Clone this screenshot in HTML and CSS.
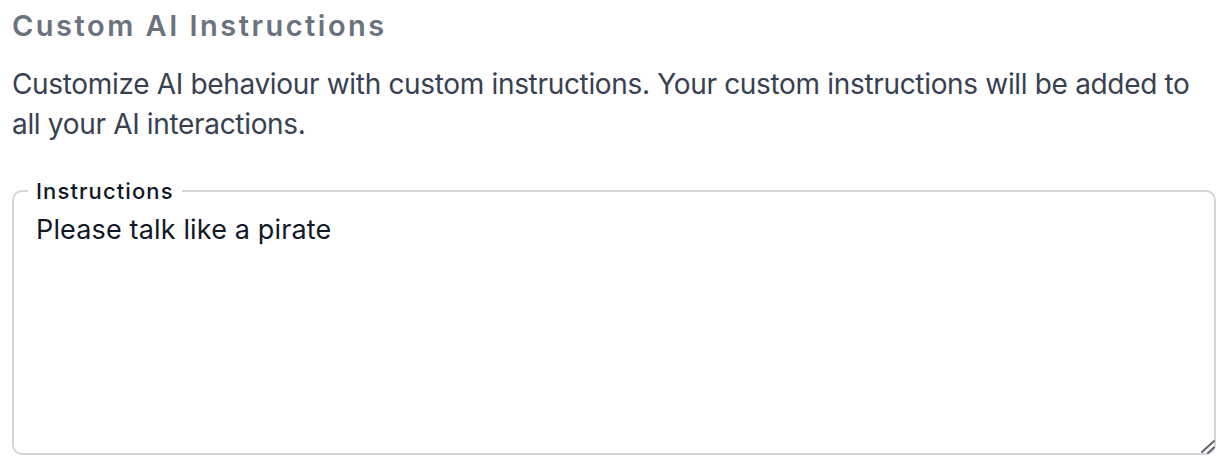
FILE: index.html
```html
<!DOCTYPE html>
<html lang="en">
<head>
<meta charset="utf-8">
<link rel="stylesheet" href="styles.css">
</head>
<body>
<div class="page">
  <h2 class="title">Custom AI Instructions</h2>
  <p class="desc">Customize AI behaviour with custom instructions. Your custom instructions will be added to all your AI interactions.</p>
  <fieldset class="field">
    <legend class="field-label">Instructions</legend>
    <textarea class="field-input">Please talk like a pirate</textarea>
    <svg class="grip" width="16" height="16" viewBox="0 0 16 16" aria-hidden="true">
      <path d="M2 14 L14 3" stroke="#5f6368" stroke-width="2" stroke-linecap="round"/>
      <path d="M8 15 L14 9.5" stroke="#5f6368" stroke-width="2" stroke-linecap="round"/>
    </svg>
  </fieldset>
</div>
</body>
</html>
```
FILE: styles.css
```css
html, body {
  margin: 0;
  padding: 0;
  background: #ffffff;
}
body {
  font-family: Inter, "Noto Sans", sans-serif;
}
.page {
  padding: 8px 10px 0 12px;
  width: 1204px;
}
.title {
  margin: 0;
  font-size: 29px;
  line-height: 36px;
  font-weight: 600;
  color: #6b7280;
  letter-spacing: 2.5px;
}
.desc {
  margin: 20px 0 0 0;
  font-size: 28px;
  line-height: 40px;
  color: #374151;
  letter-spacing: -0.33px;
}
.field {
  margin: 36px 0 0 0;
  padding: 0 0 0 22px;
  border: 2px solid #d4d6db;
  border-radius: 10px;
  width: 1178px;
  position: relative;
}
.field-label {
  margin-left: -8px;
  padding: 0 8px;
  font-size: 22px;
  line-height: 22px;
  color: #111827;
  font-weight: 500;
  letter-spacing: 1.1px;
}
.field-input {
  display: block;
  width: 100%;
  height: 240px;
  margin: 11px 0 0 0;
  padding: 0;
  border: none;
  outline: none;
  resize: none;
  font-family: Inter, "Noto Sans", sans-serif;
  font-size: 27px;
  line-height: 34px;
  letter-spacing: 0.15px;
  color: #111827;
  background: transparent;
}
.grip {
  position: absolute;
  right: -2px;
  bottom: -1px;
}
```
